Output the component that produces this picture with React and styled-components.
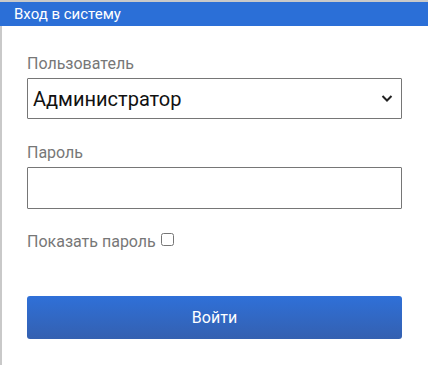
import React, { useState } from 'react';
import styled, { createGlobalStyle } from 'styled-components';

const GlobalStyle = createGlobalStyle`
  html, body {
    margin: 0;
    padding: 0;
    background: #ffffff;
    font-family: Roboto, "Liberation Sans", Arial, sans-serif;
  }
`

const Window = styled.div`
  width: 428px;
  height: 365px;
  box-sizing: border-box;
  border-top: 2px solid #c9c9c9;
  border-left: 2px solid #c9c9c9;
  background: #fff;
`

const Header = styled.div`
  height: 24px;
  background: #2b6fd7;
  color: #fff;
  font-size: 15px;
  line-height: 24px;
  margin-left: -2px;
  padding-left: 14px;
`

const Form = styled.form`
  display: flex;
  flex-direction: column;
  padding: 28px 26px 0 25px;
`

const Label = styled.label`
  color: #777;
  font-size: 16px;
  line-height: 19px;
  margin-top: ${props => props.$top || 0}px;
  margin-bottom: 5px;
`

const SelectWrap = styled.div`
  position: relative;
`

const Select = styled.select`
  width: 100%;
  height: 41px;
  box-sizing: border-box;
  appearance: none;
  border: 1px solid #767676;
  border-radius: 1px;
  background: #fff;
  color: #111;
  font-family: inherit;
  font-size: 20px;
  padding: 0 30px 0 5px;
  outline: none;
`

const Chevron = styled.svg`
  position: absolute;
  right: 9px;
  top: 16px;
  pointer-events: none;
`

const Input = styled.input`
  width: 100%;
  height: 42px;
  box-sizing: border-box;
  border: 1px solid #767676;
  border-radius: 1px;
  font-size: 18px;
  padding: 0 6px;
  outline: none;
`

const CheckRow = styled.label`
  display: flex;
  align-items: center;
  gap: 5px;
  margin-top: 23px;
  color: #777;
  font-size: 16px;
  line-height: 19px;
`

const Box = styled.input.attrs({ type: 'checkbox' })`
  width: 13px;
  height: 13px;
  margin: -4px 0 0 0;
`

const Button = styled.button`
  margin-top: 45px;
  height: 43px;
  border: none;
  border-radius: 3px;
  background: linear-gradient(#2f70d8, #3460b0);
  color: #fff;
  font-family: inherit;
  font-size: 16px;
  cursor: pointer;
`

export default function App() {
    const [show, setShow] = useState(false);

    return (
        <>
            <GlobalStyle />
            <Window>
                <Header>Вход в систему</Header>
                <Form onSubmit={e => e.preventDefault()}>
                    <Label>Пользователь</Label>
                    <SelectWrap>
                        <Select defaultValue="admin">
                            <option value="admin">Администратор</option>
                        </Select>
                        <Chevron width="12" height="9" viewBox="0 0 12 9">
                            <path d="M1.5 2 L6 6.5 L10.5 2" fill="none" stroke="#222" strokeWidth="2" />
                        </Chevron>
                    </SelectWrap>
                    <Label $top={24}>Пароль</Label>
                    <Input type={show ? 'text' : 'password'} />
                    <CheckRow>
                        Показать пароль
                        <Box checked={show} onChange={e => setShow(e.target.checked)} />
                    </CheckRow>
                    <Button type="submit">Войти</Button>
                </Form>
            </Window>
        </>
    );
}
